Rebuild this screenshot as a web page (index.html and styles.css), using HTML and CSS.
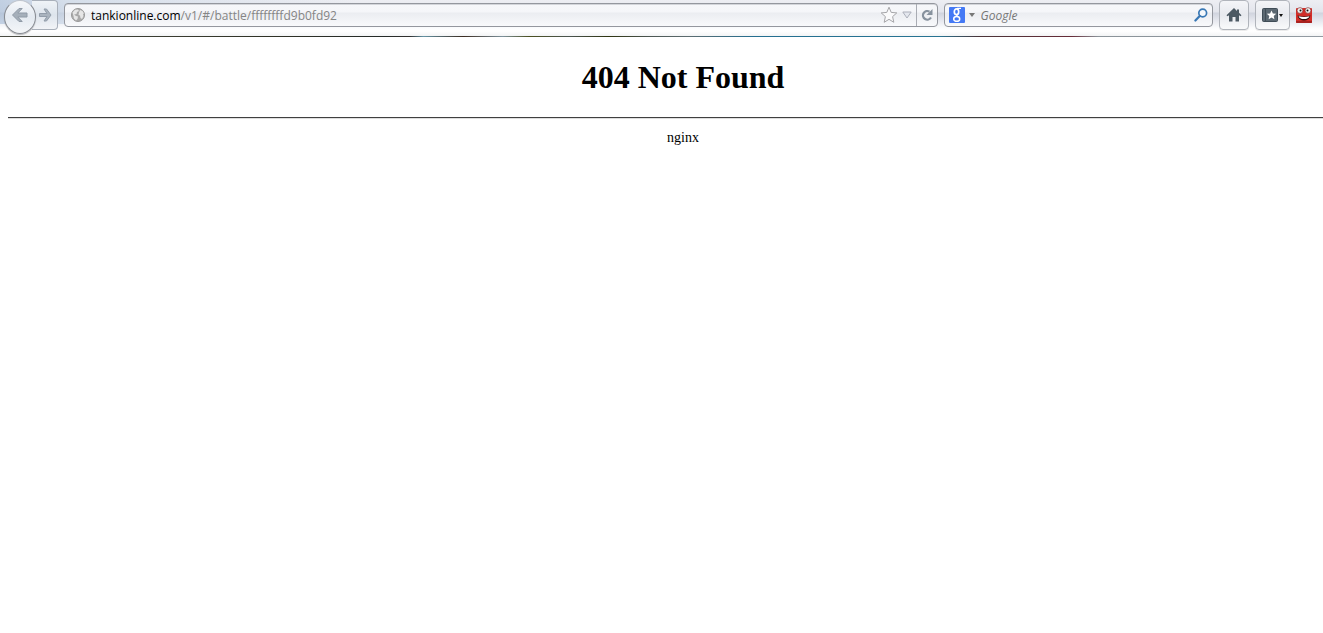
FILE: index.html
```html
<!DOCTYPE html>
<html lang="en">
<head>
<meta charset="utf-8">
<title>404 Not Found</title>
<link rel="stylesheet" href="styles.css">
</head>
<body>
<header class="toolbar">
  <nav class="history" aria-label="History">
    <button class="back" type="button" aria-label="Back">
      <svg width="18" height="16" viewBox="0 0 18 16"><path d="M8 1.500h3.200L6.800 6H16v4H6.800l4.400 4.500H8L1.500 8z" fill="#a5afba" stroke="#8f9aa6" stroke-linejoin="round"/></svg>
    </button>
    <button class="forward" type="button" aria-label="Forward">
      <svg width="14" height="14" viewBox="0 0 14 14"><path d="M6 1h2.500L13 7l-4.500 6H6l3-4.500H1.500v-3H9z" fill="#a9b3be" stroke="#929daa" stroke-linejoin="round"/></svg>
    </button>
  </nav>
  <div class="field address">
    <svg class="globe" width="16" height="16" viewBox="0 0 16 16"><circle cx="8" cy="8" r="6.500" fill="#a9a9a9" stroke="#999"/><path d="M2.500 5.500 5 2.800 8 2.500l1 1.500-2 1L6.500 7 4 7.500 6 9l2 .5-.5 2.500L6 13.500 4 11.500 3.500 9z M10 3l2.500 1L14 6.500l-1 .5.500 2-1.500 3-1.500-1-.5-2.500-1.500-.5L9 5.500z" fill="#e6e6e6"/></svg>
    <a class="url" href="#/battle/ffffffffd9b0fd92"><span class="domain">tankionline.com</span>/v1/#/battle/ffffffffd9b0fd92</a>
    <button class="plain star" type="button" aria-label="Bookmark this page">
      <svg width="18" height="18" viewBox="0 0 18 18"><path d="m9 1.200 2.200 5.200 5.600.5-4.200 3.700 1.200 5.700L9 13.300l-4.800 3 1.200-5.700L1.200 6.900l5.600-.5z" fill="#fafafb" stroke="#a6a6a9"/></svg>
    </button>
    <button class="plain history-menu" type="button" aria-label="Show history">
      <svg width="10" height="8" viewBox="0 0 10 8"><path d="M.8 1h8.400L5 7z" fill="#e4e7ee" stroke="#acb0ba"/></svg>
    </button>
    <button class="plain reload" type="button" aria-label="Reload">
      <svg width="12" height="12" viewBox="0 0 12 12"><path d="M8.500 2.600A4.300 4.300 0 1 0 10 8.500" fill="none" stroke="#87929e" stroke-width="2.200"/><path d="M11.500 0v6h-6z" fill="#87929e"/></svg>
    </button>
  </div>
  <form class="field search">
    <button class="plain engine" type="button" aria-label="Search engine">
      <svg width="16" height="16" viewBox="0 0 16 16"><rect width="16" height="16" rx="1" fill="#4479f5"/><g fill="none" stroke="#fff"><ellipse cx="7.500" cy="4.700" rx="2.200" ry="2.900" stroke-width="1.700"/><path d="M8 1.400h4M9.200 7.200c-2.200 1-1.700 1.600-.2 2.400" stroke-width="1.300"/><ellipse cx="7.700" cy="11.900" rx="3" ry="2.400" stroke-width="1.500"/></g></svg>
      <svg width="6" height="4" viewBox="0 0 6 4"><path d="M0 0h6L3 4z" fill="#777"/></svg>
    </button>
    <input class="query" type="text" placeholder="Google" aria-label="Search with Google">
    <button class="plain go" type="submit" aria-label="Search">
      <svg width="14" height="14" viewBox="0 0 14 14"><circle cx="8.700" cy="5" r="3.900" fill="#f4f8fc" stroke="#3978b5" stroke-width="1.700"/><path d="m5.700 8-4.300 4.500" stroke="#3978b5" stroke-width="2.200" stroke-linecap="round"/></svg>
    </button>
  </form>
  <button class="tool home" type="button" aria-label="Home">
    <svg width="16" height="14" viewBox="0 0 16 14"><path d="M8 0 .5 7.300l1 1L3 7.200V13.500h3.500V9h3v4.500H13V7.200l1.500 1.100 1-1-2.500-2.500V1.500h-2v1.400z" fill="#4c5963"/></svg>
  </button>
  <button class="tool bookmarks" type="button" aria-label="Bookmarks">
    <svg width="16" height="14" viewBox="0 0 16 14"><rect x=".5" y=".5" width="15" height="13" rx="1" fill="#5b6872" stroke="#404d57"/><path d="M3.500 1v12" stroke="#404d57"/><path d="m9.500 2.500 1.400 3 3.300.3-2.500 2.200.7 3.300-2.900-1.700-2.900 1.700.7-3.300L4.800 5.800l3.300-.3z" fill="#fff"/></svg>
    <svg width="4" height="3" viewBox="0 0 4 3"><path d="M0 0h4L2 3z" fill="#111"/></svg>
  </button>
  <button class="plain addon" type="button" aria-label="Add-on">
    <svg width="16" height="16" viewBox="0 0 16 16"><rect y="1" width="16" height="15" rx="1" fill="#d22d28"/><path d="M0 14h16v1q0 1-1 1H1q-1 0-1-1z" fill="#a82220"/><circle cx="4" cy="3.500" r="2.900" fill="#eee" stroke="#802020" stroke-width=".6"/><circle cx="12" cy="3.500" r="2.900" fill="#eee" stroke="#802020" stroke-width=".6"/><circle cx="4.500" cy="3.500" r="1" fill="#111"/><circle cx="11.500" cy="3.500" r="1" fill="#111"/><path d="M1.500 8.500q6.500 2 13 0-1.500 5-6.500 5t-6.500-5z" fill="#2c0808"/><path d="M2.500 9.300q5.500 1.500 11 0-1 2.800-5.500 2.800t-5.500-2.800z" fill="#fff"/></svg>
  </button>
</header>
<main class="page">
  <h1>404 Not Found</h1>
  <hr>
  <p>nginx</p>
</main>
</body>
</html>
```
FILE: styles.css
```css
* { box-sizing: border-box; }

body {
  margin: 0;
  overflow-x: hidden;
  background: #fff;
  color: #000;
  font-family: "Liberation Serif", "Times New Roman", serif;
}

svg { display: block; flex: none; }

.toolbar {
  position: relative;
  display: flex;
  align-items: flex-start;
  height: 37px;
  padding: 0 11px 0 4px;
  background:
    linear-gradient(90deg, rgba(165, 188, 215, .6), rgba(190, 207, 226, .5) 5%, rgba(225, 230, 238, 0) 27%) 0 0 / 100% 24px no-repeat,
    linear-gradient(#edeef3, #e3e5ec 12px, #d0d4de 13px, #e4e6ed 20px, #fbfcfd 28px, #fff 31px, #f3f4f5 36px);
  font-family: "Open Sans", "Noto Sans", sans-serif;
  font-size: 12px;
}

.toolbar::after {
  content: "";
  position: absolute;
  inset: auto 0 0;
  height: 1px;
  background: linear-gradient(90deg, #4b4d43, #303226 20%, #252a28 29%, #323130 31%, #6594a5 32%, #3b2b20 35%, #7e929c 38%, #4b501f 40%, #4b5550 43%, #2f3410 46%, #4b5550 49%, #5d6c70 52%, #256f90 57%, #287492 71%, #4b3438 74%, #672c38 81%, #8b9399 83%, #939ba2);
}

button {
  display: flex;
  align-items: center;
  justify-content: center;
  flex: none;
  margin: 0;
  padding: 0;
  font: inherit;
}

.plain { border: 0; background: none; }

.history { display: flex; flex: none; }

.back {
  z-index: 1;
  width: 32px;
  height: 34px;
  padding-bottom: 4px;
  border: 1px solid #868a91;
  border-top-color: #c1c6ce;
  border-radius: 50%;
  background: linear-gradient(#f6f8fb, #e4eaf1 50%, #f4f6f8);
  box-shadow: 0 1px 1px rgba(0, 0, 0, .25);
}

.forward {
  width: 26px;
  height: 30px;
  margin-left: -4px;
  border: 1px solid #a9b0ba;
  border-left: 0;
  border-radius: 0 4px 4px 0;
  background: linear-gradient(#eff3f7, #dde4ec 50%, #f2f4f7);
}

.field {
  display: flex;
  align-items: center;
  height: 24px;
  margin-top: 3px;
  border: 1px solid #94979e;
  border-radius: 4px;
  background: linear-gradient(#f6f7fa, #f5f6f9 8px, #ebedf1 9px, #f8f9fb);
  box-shadow: inset 0 1px 0 #d3d5da;
}

.address { flex: 1; min-width: 0; margin-left: 6px; padding-left: 5px; }

.url {
  flex: 1;
  min-width: 0;
  margin-left: 5px;
  overflow: hidden;
  color: #858585;
  text-decoration: none;
  white-space: nowrap;
}

.domain { color: #000; }

.history-menu { width: 18px; height: 22px; }

.reload {
  width: 21px;
  height: 22px;
  border-left: 1px solid #a9acb3;
}

.search { flex: none; width: 20.6%; margin-left: 6px; padding: 0 4px; }

.engine { gap: 4px; }

.query {
  flex: 1;
  min-width: 0;
  margin-left: 6px;
  padding: 0;
  border: 0;
  background: none;
  font: inherit;
}

.query::placeholder { color: #777; font-style: italic; opacity: 1; }

.tool {
  height: 30px;
  margin-left: 6px;
  border: 1px solid #b0b4bb;
  border-radius: 4px;
  background: linear-gradient(#f4f5f8, #e7e9ee 50%, #f9fafb);
  box-shadow: 0 1px 0 rgba(0, 0, 0, .08);
}

.home { width: 30px; }

.bookmarks { gap: 1px; width: 35px; }

.addon { margin: 7px 0 0 6px; }

/* The document is laid out wider than the visible pane. */
.page {
  margin: 0 -35px 0 8px;
  text-align: center;
}

h1 {
  margin: 0;
  padding-top: 22px;
  font-size: 32px;
  line-height: 36px;
}

hr {
  height: 2px;
  margin: 22px 0 10px;
  border: 0;
  border-top: 1px solid #404040;
  border-bottom: 1px solid #dedede;
}

p { margin: 0; font-size: 14px; line-height: 18px; }
```
